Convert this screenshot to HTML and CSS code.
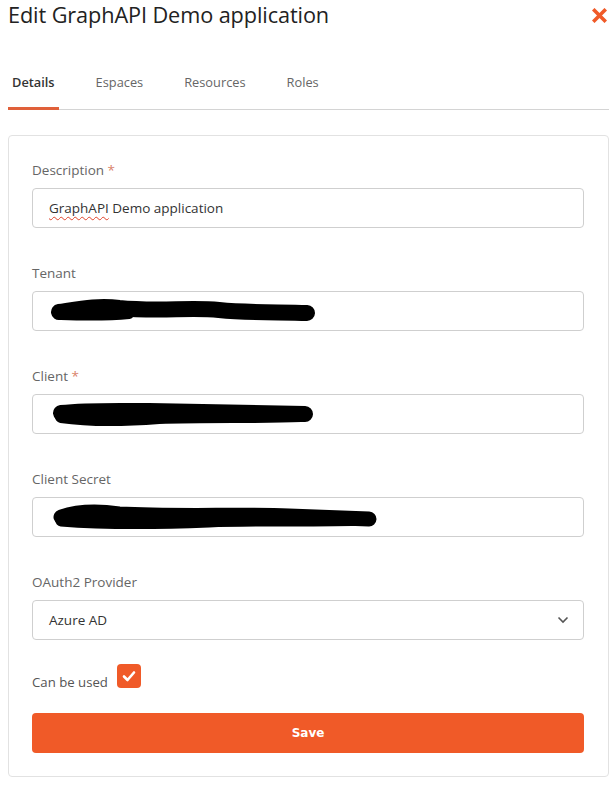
FILE: index.html
```html
<!DOCTYPE html>
<html lang="en">
<head>
<meta charset="utf-8">
<title>Edit GraphAPI Demo application</title>
<link rel="stylesheet" href="styles.css">
</head>
<body>
<div class="dialog">
  <header class="dialog-header">
    <h1 class="dialog-title">Edit GraphAPI Demo application</h1>
    <button class="close-btn" aria-label="Close">
      <svg width="15" height="15" viewBox="0 0 15 15"><path d="M2.5 2.5 L12.5 12.5 M12.5 2.5 L2.5 12.5" stroke="#f05a28" stroke-width="3.6" stroke-linecap="square"/></svg>
    </button>
  </header>

  <nav class="tabs">
    <a class="tab active">Details</a>
    <a class="tab">Espaces</a>
    <a class="tab">Resources</a>
    <a class="tab">Roles</a>
  </nav>

  <form class="card">
    <div class="field">
      <label class="label">Description <span class="req">*</span></label>
      <div class="input"><span class="typo">GraphAPI</span>&nbsp;Demo application</div>
    </div>

    <div class="field">
      <label class="label">Tenant</label>
      <div class="input">
        <svg class="scribble" width="280" height="40" viewBox="0 0 280 40">
          <path d="M20 21 C40 18 60 14 80 17 C120 21 150 16 180 19 C210 22 240 21 268 22" stroke="#000" stroke-width="16" stroke-linecap="round" fill="none"/>
          <path d="M22 24 C50 25 70 25 90 23" stroke="#000" stroke-width="10" stroke-linecap="round" fill="none"/>
        </svg>
      </div>
    </div>

    <div class="field">
      <label class="label">Client <span class="req">*</span></label>
      <div class="input">
        <svg class="scribble" width="280" height="40" viewBox="0 0 280 40">
          <path d="M22 19 C50 16 80 17 110 17 C160 18 200 19 266 20" stroke="#000" stroke-width="16" stroke-linecap="round" fill="none"/>
          <path d="M22 23 C50 27 80 27 120 24 C170 22 220 24 262 22" stroke="#000" stroke-width="12" stroke-linecap="round" fill="none"/>
        </svg>
      </div>
    </div>

    <div class="field">
      <label class="label">Client Secret</label>
      <div class="input">
        <svg class="scribble" width="340" height="40" viewBox="0 0 340 40">
          <path d="M22 20 C40 14 60 14 80 17 C140 20 200 17 250 19 C280 20 310 21 330 22" stroke="#000" stroke-width="15" stroke-linecap="round" fill="none"/>
          <path d="M22 24 C60 27 120 27 170 25 C220 23 280 25 326 23" stroke="#000" stroke-width="11" stroke-linecap="round" fill="none"/>
        </svg>
      </div>
    </div>

    <div class="field field-last">
      <label class="label">OAuth2 Provider</label>
      <div class="input select">
        <span>Azure AD</span>
        <svg width="12" height="8" viewBox="0 0 12 8"><path d="M1.5 1.5 L6 6 L10.5 1.5" stroke="#555" stroke-width="1.6" fill="none"/></svg>
      </div>
    </div>

    <div class="check-row">
      <span class="check-label">Can be used</span>
      <span class="checkbox">
        <svg width="16" height="16" viewBox="0 0 16 16"><path d="M3 8.5 L6.5 12 L13 4.5" stroke="#fff" stroke-width="2.6" fill="none" stroke-linecap="round" stroke-linejoin="round"/></svg>
      </span>
    </div>

    <button type="button" class="save-btn">Save</button>
  </form>
</div>
</body>
</html>
```

FILE: styles.css
```css
* { box-sizing: border-box; }

html, body {
  margin: 0;
  padding: 0;
  background: #fff;
}

body {
  font-family: "Open Sans", "Noto Sans", "Liberation Sans", sans-serif;
  color: #333;
}

.dialog {
  width: 616px;
  padding: 0 0 0 8px;
}

.dialog-header {
  display: flex;
  justify-content: space-between;
  align-items: flex-start;
  height: 62px;
  padding-right: 9px;
}

.dialog-title {
  margin: 0;
  padding-top: 1px;
  font-size: 21.7px;
  font-weight: 400;
  line-height: 28px;
  color: #222;
  letter-spacing: -0.1px;
}

.close-btn {
  border: 0;
  background: none;
  padding: 0;
  margin-top: 8px;
  width: 15px;
  height: 15px;
  cursor: pointer;
}

.tabs {
  display: flex;
  gap: 33px;
  width: 601px;
  height: 48px;
  border-bottom: 1px solid #d4d4d4;
}

.tab {
  display: block;
  padding: 10px 4px 0 4px;
  font-size: 12.8px;
  line-height: 20px;
  color: #666;
  border-bottom: 3px solid transparent;
  margin-bottom: -1px;
}

.tab.active {
  color: #333;
  font-weight: 600;
  border-bottom-color: #e0603a;
}

.card {
  display: block;
  width: 601px;
  margin-top: 25px;
  padding: 24px 24px 23px 23px;
  border: 1px solid #e2e2e2;
  border-radius: 4px;
}

.field {
  margin-bottom: 35px;
}

.field.field-last {
  margin-bottom: 24px;
}

.label {
  display: block;
  font-size: 13.5px;
  line-height: 20px;
  color: #666;
  margin-bottom: 8px;
}

.req {
  color: #d9826a;
}

.input {
  display: flex;
  align-items: center;
  height: 40px;
  padding: 0 16px;
  border: 1px solid #cfcfcf;
  border-radius: 4px;
  font-size: 13.5px;
  color: #333;
  white-space: nowrap;
}

.typo {
  text-decoration: underline wavy #e0442b;
  text-decoration-thickness: 1px;
  text-underline-offset: 3px;
}

.scribble {
  display: block;
  margin-left: -10px;
  flex: none;
}

.select {
  justify-content: space-between;
  padding-right: 14px;
}

.check-row {
  display: flex;
  align-items: flex-end;
  gap: 9px;
  height: 24px;
  margin-bottom: 25px;
}

.check-label {
  font-size: 13.2px;
  line-height: 17px;
  color: #555;
  margin-bottom: -3px;
}

.checkbox {
  display: flex;
  align-items: center;
  justify-content: center;
  width: 24px;
  height: 24px;
  border-radius: 4px;
  background: #f05a28;
}

.save-btn {
  display: block;
  width: 100%;
  height: 40px;
  border: 0;
  border-radius: 4px;
  background: #f05a28;
  color: #fff;
  font-family: "DejaVu Sans", "Liberation Sans", sans-serif;
  font-size: 12px;
  font-weight: 700;
  cursor: pointer;
}
```
